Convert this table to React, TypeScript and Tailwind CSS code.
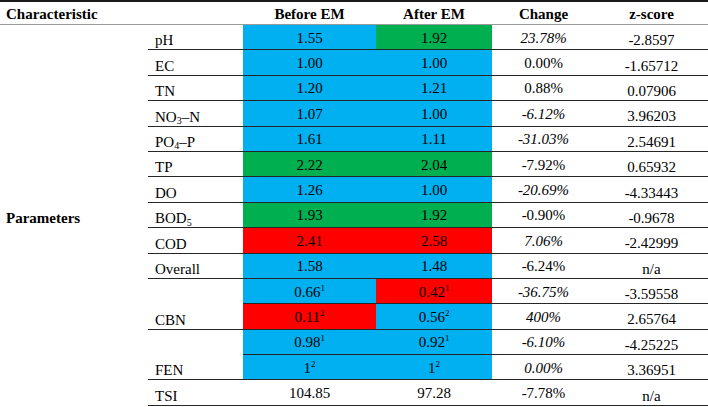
import React from 'react';

type Fill = 'blue' | 'green' | 'red' | 'none';

type Row = {
  label?: React.ReactNode;
  span?: number;
  before: React.ReactNode;
  beforeFill: Fill;
  after: React.ReactNode;
  afterFill: Fill;
  change: string;
  italic?: boolean;
  z: string;
};

const fillClass: Record<Fill, string> = {
  blue: 'bg-[#00b0f0]',
  green: 'bg-[#00b050]',
  red: 'bg-[#ff0000]',
  none: 'bg-white',
};

const Sup = ({ n }: { n: string }) => <sup className="text-[9px]">{n}</sup>;
const Sub = ({ n }: { n: string }) => <sub className="text-[10px]">{n}</sub>;

const rows: Row[] = [
  { label: 'pH', before: '1.55', beforeFill: 'blue', after: '1.92', afterFill: 'green', change: '23.78%', italic: true, z: '-2.8597' },
  { label: 'EC', before: '1.00', beforeFill: 'blue', after: '1.00', afterFill: 'blue', change: '0.00%', z: '-1.65712' },
  { label: 'TN', before: '1.20', beforeFill: 'blue', after: '1.21', afterFill: 'blue', change: '0.88%', z: '0.07906' },
  { label: <>NO<Sub n="3" />–N</>, before: '1.07', beforeFill: 'blue', after: '1.00', afterFill: 'blue', change: '-6.12%', italic: true, z: '3.96203' },
  { label: <>PO<Sub n="4" />–P</>, before: '1.61', beforeFill: 'blue', after: '1.11', afterFill: 'blue', change: '-31.03%', italic: true, z: '2.54691' },
  { label: 'TP', before: '2.22', beforeFill: 'green', after: '2.04', afterFill: 'green', change: '-7.92%', z: '0.65932' },
  { label: 'DO', before: '1.26', beforeFill: 'blue', after: '1.00', afterFill: 'blue', change: '-20.69%', italic: true, z: '-4.33443' },
  { label: <>BOD<Sub n="5" /></>, before: '1.93', beforeFill: 'green', after: '1.92', afterFill: 'green', change: '-0.90%', z: '-0.9678' },
  { label: 'COD', before: '2.41', beforeFill: 'red', after: '2.58', afterFill: 'red', change: '7.06%', italic: true, z: '-2.42999' },
  { label: 'Overall', before: '1.58', beforeFill: 'blue', after: '1.48', afterFill: 'blue', change: '-6.24%', z: 'n/a' },
  { label: 'CBN', span: 2, before: <>0.66<Sup n="1" /></>, beforeFill: 'blue', after: <>0.42<Sup n="1" /></>, afterFill: 'red', change: '-36.75%', italic: true, z: '-3.59558' },
  { before: <>0.11<Sup n="2" /></>, beforeFill: 'red', after: <>0.56<Sup n="2" /></>, afterFill: 'blue', change: '400%', italic: true, z: '2.65764' },
  { label: 'FEN', span: 2, before: <>0.98<Sup n="1" /></>, beforeFill: 'blue', after: <>0.92<Sup n="1" /></>, afterFill: 'blue', change: '-6.10%', italic: true, z: '-4.25225' },
  { before: <>1<Sup n="2" /></>, beforeFill: 'blue', after: <>1<Sup n="2" /></>, afterFill: 'blue', change: '0.00%', italic: true, z: '3.36951' },
  { label: 'TSI', before: '104.85', beforeFill: 'none', after: '97.28', afterFill: 'none', change: '-7.78%', z: 'n/a' },
];

const line = 'border-b border-[#262626]';

export default function App() {
  return (
    <div className="w-[708px] h-[407px] bg-white text-black text-[15px] leading-none font-[family-name:Liberation_Serif,serif]">
      <div className="border-t-2 border-[#1a1a1a] grid grid-cols-[148px_95px_133px_116px_103px_113px] grid-rows-[23px_repeat(15,25.4px)]">
        {/* header */}
        <div className="col-span-2 flex items-center pl-[6px] pt-[3px] font-bold border-b border-[#9a9a9a]">Characteristic</div>
        <div className="flex items-center justify-center pt-[3px] font-bold border-b border-[#9a9a9a]">Before EM</div>
        <div className="flex items-center justify-center pt-[3px] font-bold border-b border-[#9a9a9a]">After EM</div>
        <div className="flex items-center justify-center pt-[3px] font-bold border-b border-[#9a9a9a]">Change</div>
        <div className="flex items-center justify-center pt-[3px] font-bold border-b border-[#9a9a9a]">z-score</div>

        <div className="col-start-1 row-start-2 row-span-15 flex items-center pl-[6px] pt-[6px] font-bold">
          Parameters
        </div>

        {rows.map((r, i) => (
          <React.Fragment key={i}>
            {r.label !== undefined && (
              <div className={`${line} ${r.span === 2 ? 'row-span-2' : ''} flex items-end pl-[7px] pb-[1px]`}>
                <span>{r.label}</span>
              </div>
            )}
            <div className={`${line} ${fillClass[r.beforeFill]} flex items-center justify-center pt-[2px]`}>{r.before}</div>
            <div className={`${line} ${fillClass[r.afterFill]} flex items-center justify-center pt-[2px]`}>{r.after}</div>
            <div className={`${line} flex items-center justify-center pt-[2px] ${r.italic ? 'italic' : ''}`}>{r.change}</div>
            <div className={`${line} flex items-center justify-center pt-[7px]`}>{r.z}</div>
          </React.Fragment>
        ))}
      </div>
    </div>
  );
}
